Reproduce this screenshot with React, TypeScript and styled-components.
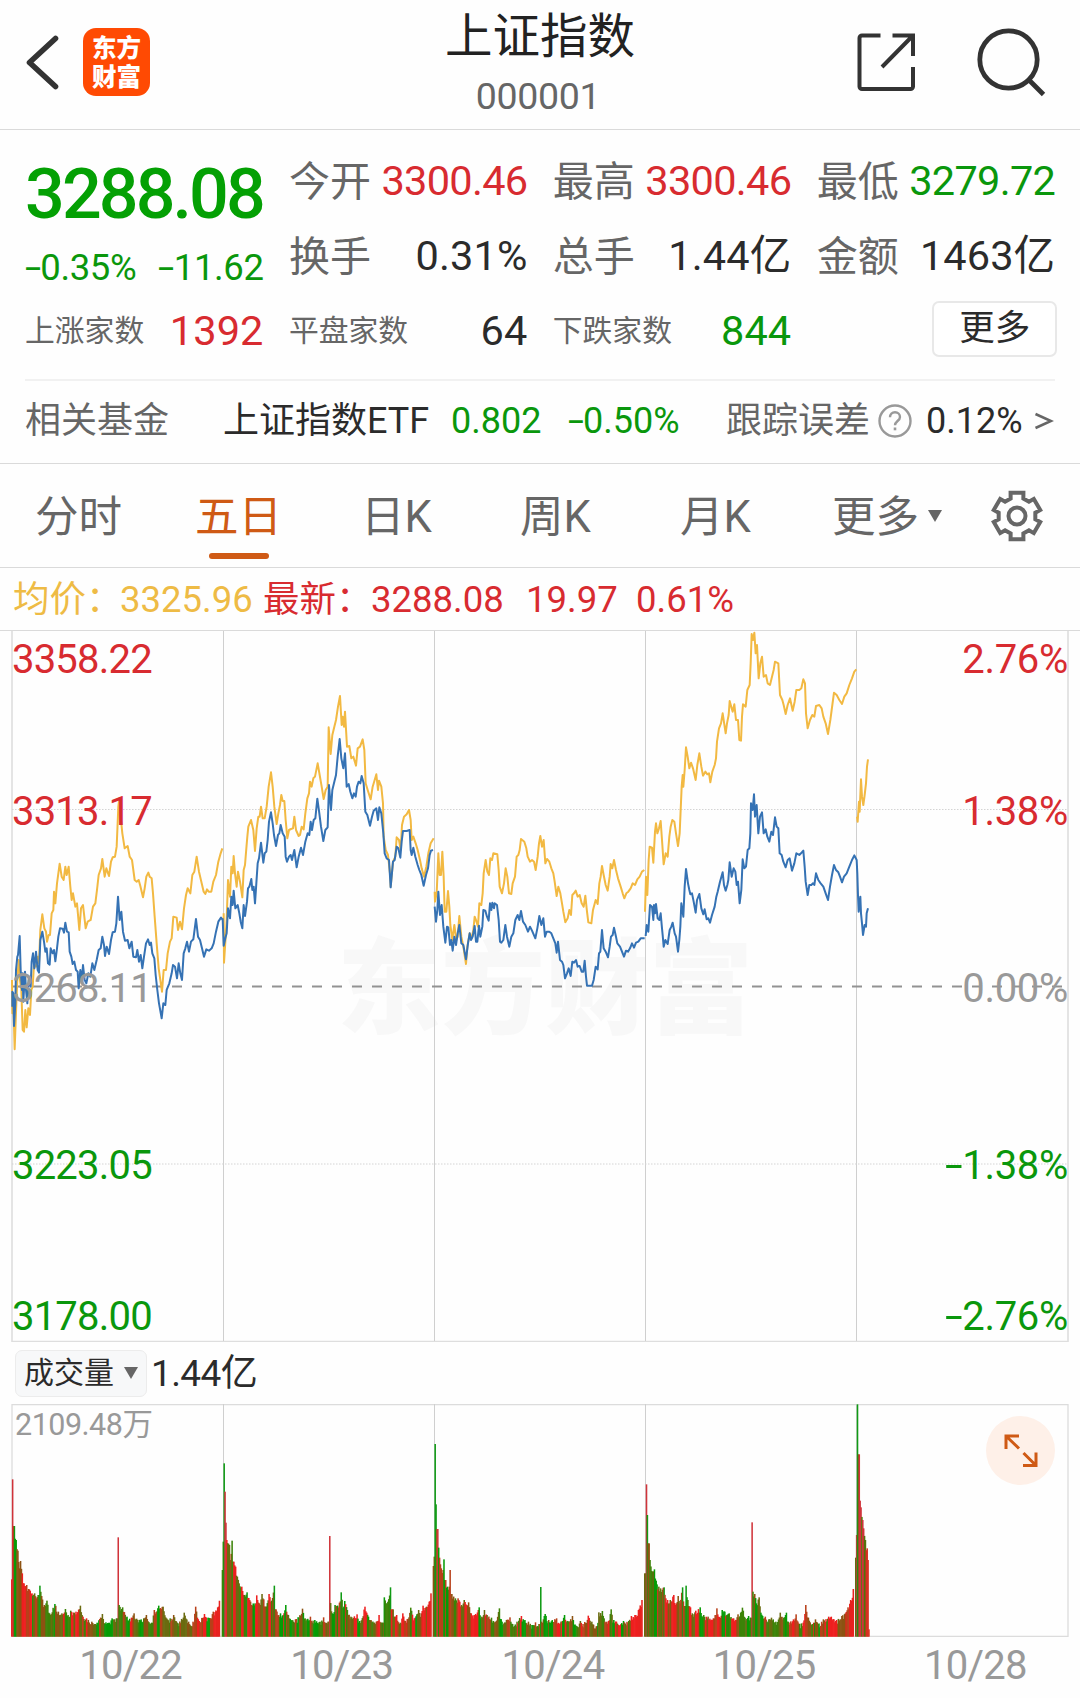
import React from "react";
import styled, { createGlobalStyle } from "styled-components";

const RED = "#d82b30";
const GREEN = "#0a970c";
const DARK = "#2b2b2b";
const GRAY = "#666666";
const LIGHT = "#999999";
const ORANGE = "#cf5a15";
const LINE = "#dadada";

const Global = createGlobalStyle`
  *, *::before, *::after { box-sizing: border-box; }
  body {
    margin: 0;
    background: #fefefe;
    font-family: Roboto, "Noto Sans CJK SC", sans-serif;
    line-height: 1;
    color: ${DARK};
  }
`;

const Page = styled.main`
  width: 1080px;
  height: 1698px;
  display: flex;
  flex-direction: column;
  background: #fefefe;
  overflow: hidden;
  white-space: nowrap;
`;

const Header = styled.header`
  height: 130px;
  flex: none;
  display: grid;
  grid-template-columns: 1fr auto 1fr;
  border-bottom: 1px solid ${LINE};
`;

const HeaderSide = styled.div<{ $end?: boolean }>`
  display: flex;
  align-items: flex-start;
  justify-content: ${(p) => (p.$end ? "flex-end" : "flex-start")};
  padding: ${(p) => (p.$end ? "26px 33px 0 0" : "28px 0 0 25px")};
  gap: ${(p) => (p.$end ? "60px" : "23px")};
`;

const Logo = styled.div`
  width: 67px;
  height: 68px;
  border-radius: 13px;
  background: #ff4a03;
  color: #fff;
  font-size: 24.5px;
  font-weight: 900;
  line-height: 29px;
  text-align: center;
  padding-top: 6px;
`;

const TitleBlock = styled.div`
  display: flex;
  flex-direction: column;
  align-items: center;
  padding-top: 14px;
`;

const Title = styled.h1`
  margin: 0;
  font-size: 47.5px;
  font-weight: 400;
  color: #222;
`;

const Code = styled.div`
  font-size: 37.5px;
  letter-spacing: -0.3px;
  color: ${GRAY};
  margin: 16px 4px 0 0;
`;

const Quote = styled.section`
  height: 334px;
  flex: none;
  padding: 12px 25px 0;
  border-bottom: 1px solid ${LINE};
`;

const Stats = styled.div`
  display: grid;
  grid-template-columns: repeat(4, 238.5px);
  grid-template-rows: repeat(3, 75px);
  column-gap: 25.4px;
  height: 239px;
  border-bottom: 2px solid #f1f1f1;
`;

const PriceCell = styled.div`
  grid-row: span 2;
  display: flex;
  flex-direction: column;
  padding-top: 17px;
  color: ${GREEN};
`;

const Price = styled.div`
  font-size: 70px;
  font-weight: 500;
  letter-spacing: -2.9px;
  color: #04a004;
`;

const Changes = styled.div`
  display: flex;
  justify-content: space-between;
  margin-top: 21px;
  font-size: 36.5px;
  letter-spacing: -0.4px;
`;

const Minus = styled.span`
  display: inline-block;
  width: 0.42em;
  transform: scaleX(1.6);
  transform-origin: left center;
`;

const Stat = styled.div`
  display: flex;
  align-items: center;
  justify-content: space-between;
`;

const StatLabel = styled.span<{ $small?: boolean }>`
  font-size: ${(p) => (p.$small ? 29.8 : 41)}px;
  color: ${GRAY};
  padding-top: ${(p) => (p.$small ? 3 : 5)}px;
`;

const StatValue = styled.span<{ $color?: string; $tight?: boolean }>`
  font-size: 41.5px;
  letter-spacing: ${(p) => (p.$tight ? -0.7 : 0.1)}px;
  color: ${(p) => p.$color ?? DARK};
  padding-top: 3px;
`;

const MoreButton = styled.button`
  width: 125px;
  height: 56px;
  margin: 0 -2px 2px auto;
  border: 2px solid #e8e8e8;
  border-radius: 7px;
  background: #fff;
  font: inherit;
  font-size: 35.5px;
  line-height: 1;
  color: ${DARK};
  padding: 0;
`;

const FundRow = styled.div`
  height: 80px;
  display: flex;
  align-items: center;
  font-size: 36px;
`;

const Cell = styled.span<{ $w: number; $color?: string }>`
  width: ${(p) => p.$w}px;
  flex: none;
  color: ${(p) => p.$color ?? DARK};
`;

const Tabs = styled.nav`
  height: 104px;
  flex: none;
  display: flex;
  padding-left: 35px;
  border-bottom: 1px solid ${LINE};
  font-size: 43.5px;
  color: ${GRAY};
`;

const Tab = styled.div<{ $w: number; $active?: boolean }>`
  width: ${(p) => p.$w}px;
  flex: none;
  display: flex;
  flex-direction: column;
  padding-top: 32px;
  color: ${(p) => (p.$active ? ORANGE : "inherit")};

  &::after {
    content: "";
    display: ${(p) => (p.$active ? "block" : "none")};
    width: 60px;
    height: 6px;
    margin: 13px 0 0 14px;
    border-radius: 3px;
    background: ${ORANGE};
  }
`;

const TabMore = styled.div`
  width: 159px;
  display: flex;
  align-items: flex-start;
  gap: 9px;
  padding-top: 32px;
`;

const Caret = styled.i<{ $top?: number }>`
  width: 0;
  height: 0;
  margin-top: ${(p) => p.$top ?? 0}px;
  border: 7.5px solid transparent;
  border-top: 12px solid ${GRAY};
  border-bottom: 0;
`;

const Legend = styled.div`
  height: 63px;
  flex: none;
  display: flex;
  align-items: center;
  padding: 2px 0 0 13px;
  border-bottom: 1px solid ${LINE};
  font-size: 36.5px;
`;

const PriceChart = styled.section`
  position: relative;
  height: 711px;
  flex: none;

  svg {
    display: block;
  }
`;

const Watermark = styled.div`
  position: absolute;
  left: 337px;
  top: 298px;
  font-family: "Noto Sans CJK SC", sans-serif;
  font-size: 104px;
  font-weight: 900;
  color: #f8f8f8;
`;

const AxisLabel = styled.span<{ $y: number; $color: string; $right?: boolean }>`
  position: absolute;
  top: ${(p) => p.$y - 19}px;
  ${(p) => (p.$right ? "right: 12px;" : "left: 12px;")}
  font-size: 40px;
  letter-spacing: ${(p) => (p.$right ? -0.3 : -0.8)}px;
  color: ${(p) => p.$color};
`;

const VolumeHeader = styled.div`
  height: 62px;
  flex: none;
  display: flex;
  align-items: center;
  padding-left: 15px;
  gap: 4px;
  font-size: 37px;
  letter-spacing: -0.6px;
`;

const VolumeChip = styled.div`
  width: 132px;
  height: 47px;
  display: flex;
  align-items: center;
  padding-left: 8px;
  gap: 10px;
  border: 1px solid #ececec;
  border-radius: 7px;
  background: #f7f8f9;
  font-size: 30px;
  letter-spacing: 0;
`;

const VolumeChart = styled.section`
  position: relative;
  height: 233px;
  flex: none;

  svg {
    display: block;
  }
`;

const VolumeMax = styled.span`
  position: absolute;
  left: 15px;
  top: 6px;
  font-size: 30.5px;
  letter-spacing: -0.5px;
  color: ${LIGHT};
`;

const ExpandButton = styled.div`
  position: absolute;
  left: 986px;
  top: 12px;
  width: 69px;
  height: 69px;
  border-radius: 50%;
  background: #fef0e8;
`;

const Dates = styled.div`
  display: grid;
  grid-template-columns: repeat(5, 211.2px);
  padding: 9px 0 0 25px;
  font-size: 40px;
  letter-spacing: -0.7px;
  text-align: center;
  color: ${LIGHT};
`;

type Series = { x: number; y: number; avg: string; price: string };

/* One entry per trading day; coordinates are thirds of a pixel from (x, y). */
const days: Series[] = [
  {
    x: 0,
    y: -11,
    price:
      "37,1160 37,1115 40,1120 42,1218 46,1150 48,1050 52,1010 54,1005 59,948 62,1050 66,1110 68,1060 70,1145 75,1055 78,1110 82,1150 86,1080 92,1100 95,1025 99,1000 103,1045 108,995 113,1050 117,1058 121,960 127,935 132,965 136,995 140,985 144,1030 149,1034 152,985 158,1000 162,990 166,1024 171,985 175,950 180,925 188,926 192,938 196,908 201,935 206,937 209,995 214,1010 218,1032 223,1025 228,1050 233,1055 236,1105 241,1050 245,1085 249,1035 254,1080 259,1090 265,1060 271,1070 277,1030 283,1050 290,1020 296,990 302,985 307,950 312,975 315,1008 320,980 327,1002 333,960 338,937 345,935 349,910 354,830 359,900 364,875 369,935 375,962 383,960 388,985 395,965 400,1010 408,1012 412,990 417,1025 422,1005 427,1045 432,1010 438,970 444,958 449,975 453,968 457,1000 463,1015 467,1065 472,1110 477,1150 485,1195 490,1150 496,1155 500,1110 508,1090 515,1060 519,1035 525,1040 531,1075 536,1030 541,1060 546,1080 551,1000 556,985 561,965 567,995 573,965 580,958 588,897 594,950 600,960 606,985 612,1010 619,988 627,992 635,985 641,970 648,935 655,905 663,893 669,900",
    avg: "36,1080 37,1180 40,1150 44,1288 49,1150 52,1080 56,1020 60,1080 64,1110 68,1230 72,1235 76,1170 80,1222 85,1165 90,1185 94,1110 98,1100 102,1035 108,1040 113,1010 117,1030 121,930 127,883 133,925 138,935 141,965 146,945 150,945 155,880 160,870 162,815 166,850 171,790 179,731 185,770 191,780 196,740 200,765 206,740 211,800 215,840 219,820 226,860 231,850 238,930 243,865 249,855 257,925 263,905 272,900 279,860 286,850 291,810 296,765 303,745 307,717 314,770 319,745 327,768 333,725 338,712 345,710 350,680 355,560 358,535 362,590 367,640 374,685 383,678 389,710 396,720 404,780 410,785 416,780 421,798 429,832 434,805 439,770 445,758 449,770 455,775 459,820 464,890 470,970 476,1045 486,1115 491,1050 498,1050 503,1000 510,965 515,955 520,890 530,893 534,930 540,905 546,928 552,865 558,825 563,805 571,820 577,765 583,755 590,710 597,755 604,785 611,815 616,822 621,808 626,815 634,815 640,785 648,765 655,725 662,700 667,685",
  },
  {
    x: 220,
    y: -11,
    price:
      "8,895 11,977 16,955 20,940 24,865 30,895 34,830 38,855 41,812 46,865 53,855 58,880 62,905 67,925 71,855 75,888 81,845 84,805 88,800 94,777 97,810 101,800 105,850 109,790 113,730 117,715 123,668 130,728 134,700 139,695 143,660 147,605 153,577 158,610 162,645 168,678 174,645 178,640 182,615 188,640 194,650 197,710 201,725 207,710 212,705 216,720 223,690 230,742 236,710 243,683 249,705 256,665 263,640 268,645 272,605 276,630 281,600 286,595 292,536 298,580 303,620 310,663 316,630 323,622 327,495 333,570 337,510 343,485 348,465 353,410 359,357 364,415 370,445 375,400 380,500 386,492 391,515 397,535 402,520 407,530 411,500 416,485 421,490 425,468 431,490 436,575 442,585 450,617 456,590 461,572 469,565 474,600 478,562 484,580 490,640 494,700 500,715 507,720 512,802 519,725 524,720 530,680 535,685 541,713 545,665 549,633 560,633 569,630 572,690 575,705 580,683 586,710 593,735 598,750 604,765 611,797 618,765 624,745 629,705 633,692 639,690",
    avg: "11,880 12,1028 17,950 20,900 24,780 30,830 34,740 38,760 41,708 45,760 50,800 54,755 60,785 67,832 71,750 75,735 79,685 82,650 85,620 93,600 100,630 105,693 110,625 115,590 119,590 123,560 128,595 134,595 140,560 146,500 153,457 158,500 163,560 170,612 175,580 180,555 184,525 188,543 193,543 197,600 202,655 207,630 213,627 219,625 223,590 228,630 236,648 240,645 245,620 251,628 256,580 262,535 267,520 270,485 275,500 280,475 285,470 293,430 299,465 305,500 311,537 317,510 323,500 326,322 332,402 337,345 343,320 348,300 354,260 360,228 365,315 368,290 372,320 375,275 381,380 388,378 394,415 400,410 408,437 413,385 420,380 428,358 433,390 437,490 443,510 452,538 458,500 464,480 469,463 474,510 477,482 484,500 489,550 491,650 497,690 504,705 511,770 512,800 519,725 526,710 530,652 537,660 542,690 546,615 552,590 560,583 567,570 572,600 575,660 580,650 587,670 593,690 600,720 605,745 612,770 619,740 625,700 632,670 641,655",
  },
  {
    x: 430,
    y: 129,
    price:
      "14,440 18,485 22,450 25,395 30,465 35,435 40,500 46,548 51,500 55,502 60,555 64,540 68,572 73,530 78,555 83,520 88,495 94,550 100,555 108,598 114,550 119,520 123,540 128,530 134,498 138,545 142,545 147,497 151,530 157,500 160,450 166,452 171,470 176,482 180,430 184,450 187,428 192,445 194,430 201,435 206,480 210,545 214,548 220,540 226,495 231,530 238,560 244,530 250,520 256,480 263,465 268,480 273,453 279,485 286,495 294,515 300,500 306,512 316,535 322,505 328,468 334,495 340,475 345,530 350,515 358,515 364,520 370,535 376,550 380,578 384,545 390,600 396,605 400,615 405,655 411,640 416,625 422,648 427,605 432,608 438,600 443,620 449,618 455,635 460,635 464,602 468,650 471,677 486,677 491,660 497,620 503,628 507,580 511,575 516,510 521,565 527,575 534,592 539,560 543,530 548,525 552,503 558,530 562,550 570,560 576,575 582,590 588,572 594,575 600,565 606,550 612,563 618,548 625,545 632,535 644,535",
    avg: "14,395 15,425 20,400 25,280 29,345 33,345 37,275 41,350 44,455 49,455 54,393 58,440 61,495 67,540 73,495 79,540 83,530 88,468 94,530 100,560 108,612 112,560 119,520 125,535 130,510 134,470 138,480 144,500 148,430 154,435 158,400 161,340 167,300 172,335 177,345 181,295 186,300 190,280 202,283 206,330 209,380 216,400 222,370 227,325 232,350 237,400 244,402 248,370 255,350 260,290 265,285 269,270 273,237 283,245 289,265 293,290 300,305 306,300 312,305 317,330 323,290 327,250 331,228 336,260 341,240 346,310 351,297 358,305 364,325 370,340 374,365 380,408 385,380 391,400 396,430 400,455 406,487 413,475 418,450 423,465 427,405 432,400 437,392 443,410 449,405 455,430 461,440 466,407 471,455 475,487 484,490 489,450 497,420 503,432 508,370 512,350 516,318 521,345 527,375 533,392 539,350 542,312 547,325 552,300 558,330 564,355 572,380 578,400 583,415 589,400 595,395 602,385 608,370 615,375 622,358 629,350 636,335 643,330",
  },
  {
    x: 640,
    y: -11,
    price:
      "17,948 20,915 25,935 30,855 36,860 40,900 42,855 45,880 48,852 53,895 58,900 62,880 66,925 68,945 71,980 76,960 83,972 89,930 94,920 98,908 104,940 108,950 114,995 118,960 121,920 124,850 130,890 134,800 138,747 144,790 148,810 151,823 156,820 161,845 167,878 171,840 178,822 184,865 190,883 194,868 200,898 205,895 210,908 216,885 224,860 229,830 233,815 240,785 248,757 252,795 257,812 262,795 265,780 269,727 275,770 281,745 286,755 290,795 294,785 299,850 304,810 308,718 313,745 318,740 323,690 328,685 331,640 333,550 338,570 342,523 345,590 350,555 355,640 360,590 366,577 371,640 377,628 382,650 388,665 394,635 399,645 405,592 410,620 415,625 419,700 425,705 430,725 437,742 443,720 449,715 456,752 463,730 469,700 478,705 483,700 490,692 494,740 497,785 503,825 508,795 514,795 519,790 523,795 528,760 535,780 542,790 550,800 557,820 564,840 570,800 576,765 582,735 588,750 595,757 600,770 606,787 612,770 620,760 628,740 636,720 643,706 650,720 652,760 654,825 656,875 661,830 663,880 666,910 669,945 674,915 678,920 680,880 684,865",
    avg: "15,875 18,770 22,825 26,720 29,680 36,683 40,728 45,635 48,610 52,640 57,625 62,603 66,660 71,733 77,700 83,710 88,650 92,620 97,600 103,605 108,640 114,678 119,640 122,570 125,500 128,465 130,500 134,450 138,382 143,410 148,445 153,428 159,445 167,480 172,435 178,400 184,440 189,467 196,455 202,463 207,460 211,487 217,455 224,435 228,415 231,365 237,325 243,310 248,280 257,340 261,310 266,285 269,243 275,265 278,275 283,253 288,300 294,300 298,360 303,362 306,290 309,253 317,260 322,210 329,195 332,130 335,42 339,60 343,38 347,100 351,75 356,175 361,130 366,110 371,170 378,165 383,190 390,195 396,170 401,150 405,125 415,130 420,225 427,240 431,255 437,282 443,255 450,235 458,272 464,245 469,210 478,210 484,205 490,178 495,190 498,280 503,325 510,300 517,285 523,290 528,258 538,255 545,265 550,290 557,310 564,342 571,300 577,255 582,218 590,225 598,240 606,252 613,230 620,220 628,195 636,175 643,155 649,148",
  },
  {
    x: 640,
    y: -11,
    price: "",
    avg: "651,590 653,605 657,545 659,575 663,478 666,530 670,555 674,525 678,490 681,440 684,418",
  },
];

/* Volume profile per day: x offset and top edge (baseline 950), in thirds of a pixel. */
const volumes: { offset: number; tops: string }[] = [
  {
    offset: 0,
    tops: "35,778 38,478 42,618 47,660 54,692 58,745 62,723 67,760 71,790 80,795 90,812 96,820 104,820 108,835 115,825 120,797 125,828 132,855 141,842 148,880 165,852 175,875 185,880 195,867 204,885 213,872 228,875 241,857 248,890 260,895 275,905 290,908 306,882 320,912 335,895 350,895 354,652 358,855 368,862 380,890 395,893 402,880 412,900 430,895 440,885 455,908 463,870 475,857 488,860 500,895 510,895 520,885 535,910 553,878 565,905 580,905 587,860 597,903 612,882 625,893 640,875 652,862 660,828",
  },
  {
    offset: 0,
    tops: "667,750 669,665 672,430 675,515 678,608 681,660 687,675 692,720 696,662 700,725 706,740 712,770 718,790 726,800 732,825 742,817 750,840 765,850 770,826 778,850 787,822 797,860 806,822 815,842 822,797 828,868 840,880 850,885 857,855 865,885 875,900 890,897 906,866 915,895 930,890 945,900 960,905 970,892 980,910 985,905 988,648 990,838 997,880 1006,855 1018,848 1024,817 1030,860 1035,843 1042,870 1052,890 1070,883 1080,903 1095,860 1105,890 1125,908 1137,885 1145,908 1153,832 1162,850 1172,802 1178,868 1185,890 1190,885 1200,908 1208,880 1218,908 1232,863 1242,895 1256,870 1263,880 1270,857 1280,860 1287,845 1293,820",
  },
  {
    offset: 1020,
    tops: "280,738 282,710 285,372 289,553 292,627 295,683 299,713 304,745 308,750 312,718 316,780 322,800 327,800 330,750 335,822 345,835 355,835 365,855 372,840 380,855 386,847 393,880 405,885 417,862 425,890 432,870 442,885 455,893 465,905 477,865 485,905 500,900 510,892 518,912 530,905 543,888 555,900 565,905 575,915 585,907 597,912 601,801 606,905 615,882 625,900 650,895 660,910 673,885 685,905 696,888 710,918 720,903 730,912 745,887 755,905 770,918 777,877 787,873 795,905 805,903 812,868 820,900 830,905 850,903 865,903 875,888 885,885 895,870 906,840",
  },
  {
    offset: 1020,
    tops: "914,760 919,493 922,585 927,670 931,720 937,755 943,748 948,782 955,800 962,805 972,802 978,835 990,840 1000,825 1008,850 1015,828 1020,850 1027,802 1032,858 1037,797 1044,840 1050,862 1057,880 1068,872 1080,862 1090,885 1105,890 1120,895 1130,865 1135,890 1147,870 1155,875 1168,880 1180,895 1195,883 1208,863 1215,893 1225,888 1232,893 1235,607 1239,815 1245,822 1250,850 1257,832 1263,878 1275,890 1285,898 1295,893 1308,905 1320,878 1330,893 1338,878 1345,905 1360,898 1369,883 1378,912 1390,908 1398,855 1405,893 1417,912 1427,898 1435,912 1450,898 1465,890 1475,890 1490,900 1505,888 1515,880 1525,862 1533,840 1540,807",
  },
  {
    offset: 2040,
    tops: "527,713 530,645 533,253 537,403 541,542 544,562 547,600 551,625 555,660 560,685 564,720 567,928",
  },
];

type Bar = { x: number; top: number; color: string };

const STEP = 2.64;
const MIX = ["#ee1f1f", "#b8401a", "#8d5312", "#6a6b10", "#3c8308", "#069c06"];
const GREEN_PEAKS = [430, 372, 253, 553, 618, 585, 797, 801, 802, 817];

function buildBars(): Bar[] {
  let seed = 20241;
  const rnd = () => {
    seed = (seed * 1103515245 + 12345) % 2147483648;
    return seed / 2147483648;
  };
  const bars: Bar[] = [];
  volumes.forEach(({ offset, tops }, day) => {
    const pts = tops.split(" ").map((s) => s.split(",").map(Number));
    const end = pts[pts.length - 1][0];
    let mixed = MIX[3];
    let left = 0;
    for (let x = pts[0][0]; x <= end; x += STEP) {
      let i = 0;
      while (i < pts.length - 2 && pts[i + 1][0] < x) i++;
      const [ax, ay] = pts[i];
      const [bx, by] = pts[i + 1];
      const near = pts.find((p) => Math.abs(p[0] - x) <= STEP / 2);
      let top: number;
      if (near) top = near[1];
      else if (Math.abs(ay - by) > 60) top = Math.max(ay, by);
      else top = ay + ((by - ay) * (x - ax)) / (bx - ax) + rnd() * 14;
      if (left <= 0) {
        mixed = MIX[Math.floor(rnd() * MIX.length)];
        left = 1 + Math.floor(rnd() * 3.5);
      }
      left--;
      let color = mixed;
      if (day < 4 && end - x < 12) color = "#e8221f";
      if (day === 4) color = end - x < 9 ? "#d8301f" : "#55720c";
      if (near && GREEN_PEAKS.includes(near[1])) color = "#0f9a14";
      else if (near && near[1] < 660) color = "#d0333a";
      bars.push({ x: x + offset, top, color });
    }
  });
  return bars;
}

const bars = buildBars();
const dividers = [223.5, 434.5, 645.5, 856.5];

const gearPoints = Array.from({ length: 6 }, (_, i) => {
  const base = i * 60 - 90;
  return [
    [-20, 18.6],
    [-15.5, 24],
    [15.5, 24],
    [20, 18.6],
  ]
    .map(([a, r]) => {
      const t = ((base + a) * Math.PI) / 180;
      return `${(26 + r * Math.cos(t)).toFixed(2)},${(26 + r * Math.sin(t)).toFixed(2)}`;
    })
    .join(" ");
}).join(" ");

const BackIcon = () => (
  <svg width="35" height="68" viewBox="0 0 35 68" fill="none" stroke="#333" strokeWidth="5.600" strokeLinecap="round" strokeLinejoin="round">
    <path d="M30.500 10.500 4.500 34.500l26 24" />
  </svg>
);

const ShareIcon = () => (
  <svg width="62" height="70" viewBox="0 0 62 70" fill="none" stroke="#333" strokeWidth="4">
    <path d="M25.500 9.500H7a2.500 2.500 0 0 0-2.500 2.500v48.500A2.500 2.500 0 0 0 7 63h48.500a2.500 2.500 0 0 0 2.500-2.500V41" />
    <path d="M37.500 9.500H58v20.500M57.500 10 27 41" />
  </svg>
);

const SearchIcon = () => (
  <svg width="70" height="72" viewBox="0 0 70 72" fill="none" stroke="#333" strokeWidth="4.800">
    <circle cx="31.500" cy="33.500" r="28.700" />
    <path d="M52 54 66.500 68.500" />
  </svg>
);

const GearIcon = () => (
  <svg width="52" height="52" viewBox="0 0 52 52" fill="none" stroke={GRAY} strokeWidth="4" style={{ marginTop: 26 }}>
    <polygon points={gearPoints} strokeLinejoin="miter" />
    <circle cx="26" cy="26" r="8.500" />
  </svg>
);

const HelpIcon = () => (
  <svg width="35" height="36" viewBox="0 0 35 36" fill="none" stroke={LIGHT} strokeWidth="2.400">
    <circle cx="17" cy="18" r="15.500" />
    <path d="M12 14.300c0-3.200 2.200-5 5-5s5 1.800 5 4.600c0 4-5 4.200-5 8.400" />
    <path d="M17 24.500v2.800" strokeWidth="2.600" />
  </svg>
);

const MoreArrow = () => (
  <svg width="20" height="20" viewBox="0 0 20 20" fill="none" stroke={GRAY} strokeWidth="2.600">
    <path d="M1.500 3 17 10 1.500 17" />
  </svg>
);

const Signed = ({ text }: { text: string }) =>
  text.startsWith("-") ? (
    <span>
      <Minus>-</Minus>
      {text.slice(1)}
    </span>
  ) : (
    <span>{text}</span>
  );

const rows = [
  { y: 27.5, price: "3358.22", pct: "2.76%", color: RED },
  { y: 180, price: "3313.17", pct: "1.38%", color: RED },
  { y: 356.5, price: "3268.11", pct: "0.00%", color: LIGHT },
  { y: 533.5, price: "3223.05", pct: "-1.38%", color: GREEN },
  { y: 685, price: "3178.00", pct: "-2.76%", color: GREEN },
];

export default function App() {
  return (
    <>
      <Global />
      <Page>
        <Header>
          <HeaderSide>
            <BackIcon />
            <Logo>
              东方
              <br />
              财富
            </Logo>
          </HeaderSide>
          <TitleBlock>
            <Title>上证指数</Title>
            <Code>000001</Code>
          </TitleBlock>
          <HeaderSide $end>
            <ShareIcon />
            <SearchIcon />
          </HeaderSide>
        </Header>

        <Quote>
          <Stats>
            <PriceCell>
              <Price>3288.08</Price>
              <Changes>
                <Signed text="-0.35%" />
                <Signed text="-11.62" />
              </Changes>
            </PriceCell>
            <Stat>
              <StatLabel>今开</StatLabel>
              <StatValue $tight $color={RED}>3300.46</StatValue>
            </Stat>
            <Stat>
              <StatLabel>最高</StatLabel>
              <StatValue $tight $color={RED}>3300.46</StatValue>
            </Stat>
            <Stat>
              <StatLabel>最低</StatLabel>
              <StatValue $tight $color={GREEN}>3279.72</StatValue>
            </Stat>
            <Stat>
              <StatLabel>换手</StatLabel>
              <StatValue>0.31%</StatValue>
            </Stat>
            <Stat>
              <StatLabel>总手</StatLabel>
              <StatValue>1.44亿</StatValue>
            </Stat>
            <Stat>
              <StatLabel>金额</StatLabel>
              <StatValue>1463亿</StatValue>
            </Stat>
            <Stat>
              <StatLabel $small>上涨家数</StatLabel>
              <StatValue $color={RED}>1392</StatValue>
            </Stat>
            <Stat>
              <StatLabel $small>平盘家数</StatLabel>
              <StatValue>64</StatValue>
            </Stat>
            <Stat>
              <StatLabel $small>下跌家数</StatLabel>
              <StatValue $color={GREEN}>844</StatValue>
            </Stat>
            <Stat>
              <MoreButton>更多</MoreButton>
            </Stat>
          </Stats>
          <FundRow>
            <Cell $w={198} $color={GRAY}>相关基金</Cell>
            <Cell $w={228}>上证指数ETF</Cell>
            <Cell $w={117} $color={GREEN}>0.802</Cell>
            <Cell $w={158} $color={GREEN}>
              <Signed text="-0.50%" />
            </Cell>
            <Cell $w={152} $color={GRAY}>跟踪误差</Cell>
            <HelpIcon />
            <Cell $w={108} style={{ marginLeft: 13 }}>0.12%</Cell>
            <MoreArrow />
          </FundRow>
        </Quote>

        <Tabs>
          <Tab $w={160}>分时</Tab>
          <Tab $w={166} $active>五日</Tab>
          <Tab $w={159}>日K</Tab>
          <Tab $w={160}>周K</Tab>
          <Tab $w={152}>月K</Tab>
          <TabMore>
            更多
            <Caret $top={14} />
          </TabMore>
          <GearIcon />
        </Tabs>

        <Legend>
          <Cell $w={107} $color="#eebb45">均价：</Cell>
          <Cell $w={143} $color="#eebb45">3325.96</Cell>
          <Cell $w={108} $color={RED}>最新：</Cell>
          <Cell $w={155} $color={RED}>3288.08</Cell>
          <Cell $w={110} $color={RED}>19.97</Cell>
          <Cell $w={110} $color={RED}>0.61%</Cell>
        </Legend>

        <PriceChart>
          <Watermark>东方财富</Watermark>
          <svg width="1080" height="711" viewBox="0 0 1080 711" fill="none" style={{ position: "relative" }}>
            <path d="M12 0V710.500H1068V0" stroke="#dedede" strokeWidth="1.600" />
            {dividers.map((x) => (
              <path key={x} d={`M${x} 0V710`} stroke="#cfcfcf" strokeWidth="1" />
            ))}
            <path d="M12 178.500H1068M12 533H1068" stroke="#d4d4d4" strokeDasharray="1.500 1.500" />
            <path d="M12 355.500H1068" stroke="#929292" strokeWidth="2" strokeDasharray="10 10" />
            {days.map((d, i) => (
              <g key={i} transform={`translate(${d.x} ${d.y}) scale(0.33333)`} strokeWidth="6" strokeLinejoin="round">
                <polyline points={d.avg} stroke="#f2b942" />
                <polyline points={d.price} stroke="#3572b4" />
              </g>
            ))}
          </svg>
          {rows.map((r) => (
            <React.Fragment key={r.price}>
              <AxisLabel $y={r.y} $color={r.color}>{r.price}</AxisLabel>
              <AxisLabel $y={r.y} $color={r.color} $right>
                <Signed text={r.pct} />
              </AxisLabel>
            </React.Fragment>
          ))}
        </PriceChart>

        <VolumeHeader>
          <VolumeChip>
            成交量
            <Caret />
          </VolumeChip>
          <span>1.44亿</span>
        </VolumeHeader>

        <VolumeChart>
          <svg width="1080" height="233" viewBox="0 0 1080 233" fill="none">
            <path d="M12 .5H1068V232.500H12Z" stroke="#dcdcdc" strokeWidth="1.300" />
            {dividers.map((x) => (
              <path key={x} d={`M${x} 0V232`} stroke="#cfcfcf" />
            ))}
            <g transform="translate(0 -84) scale(0.33333)">
              {bars.map((b, i) => (
                <rect key={i} x={b.x - 2} y={b.top} width="4.600" height={950 - b.top} fill={b.color} />
              ))}
            </g>
          </svg>
          <VolumeMax>2109.48万</VolumeMax>
          <ExpandButton>
            <svg width="69" height="69" viewBox="0 0 69 69" fill="none" stroke={ORANGE} strokeWidth="3">
              <path d="M33 20H20V33M20 20l13 12.500M37 49.500H50V36.500M50 49.500 37.500 37" />
            </svg>
          </ExpandButton>
        </VolumeChart>

        <Dates>
          {["10/22", "10/23", "10/24", "10/25", "10/28"].map((d) => (
            <span key={d}>{d}</span>
          ))}
        </Dates>
      </Page>
    </>
  );
}
